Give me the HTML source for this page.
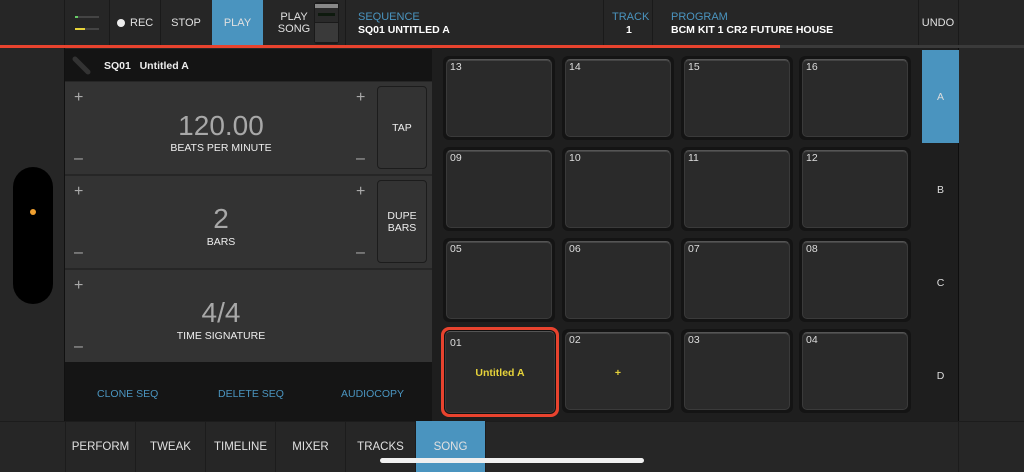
<!DOCTYPE html>
<html><head><meta charset="utf-8"><style>
*{box-sizing:border-box;margin:0;padding:0}
body{width:1024px;height:472px;overflow:hidden;background:#262626;font-family:"Liberation Sans",Arial,sans-serif;color:#ddd;position:relative}
.a{position:absolute}
.t{font-size:11px;color:#e0e0e0;text-align:center}
.vl{position:absolute;top:0;width:1px;height:45px;background:#1a1a1a}
.pad{position:absolute;width:112px;height:84px;border-radius:6px;background:#141414}
.pad div{position:absolute;left:3px;top:3px;right:3px;bottom:3px;border-radius:5px;background:#2a2a2a;border:1px solid #3a3a3a;border-top-color:#555;box-shadow:inset 0 1px 0 #444}
.pad span{position:absolute;left:7px;top:5px;font-size:10.5px;color:#ddd}
.row{position:absolute;left:65px;width:367px;height:92px;background:#333}
.pm{position:absolute;font-size:16px;color:#aaa;font-weight:300}
.big{position:absolute;width:310px;text-align:center;font-size:28px;color:#a8a8a8;font-weight:300}
.lab{position:absolute;width:310px;text-align:center;font-size:10.5px;color:#eee}
.btn{position:absolute;left:377px;width:50px;border:1px solid #1c1c1c;border-radius:4px;background:#333;font-size:10.5px;color:#eee;text-align:center;display:flex;align-items:center;justify-content:center;line-height:12px}
.tab{position:absolute;top:421px;height:51px;width:70px;border-left:1px solid #1c1c1c;font-size:11.5px;color:#e0e0e0;display:flex;align-items:center;justify-content:center}
.side{position:absolute;left:922px;width:37px;height:93px;font-size:10.5px;color:#ddd;display:flex;align-items:center;justify-content:center}
</style></head><body>
<div class="a" style="left:0;top:0;width:1024px;height:45px;background:#262626"></div>
<div class="vl" style="left:64px"></div><div class="vl" style="left:109px"></div><div class="vl" style="left:160px"></div><div class="vl" style="left:345px"></div><div class="vl" style="left:603px"></div><div class="vl" style="left:652px"></div><div class="vl" style="left:918px"></div><div class="vl" style="left:958px"></div>
<div class="a" style="left:75px;top:16px;width:24px;height:2px;background:#444"></div><div class="a" style="left:75px;top:16px;width:3px;height:2px;background:#6c6"></div>
<div class="a" style="left:75px;top:28px;width:24px;height:2px;background:#444"></div><div class="a" style="left:75px;top:28px;width:10px;height:2px;background:#e6d33a"></div>
<div class="a" style="left:117px;top:19px;width:8px;height:8px;border-radius:50%;background:#eee"></div>
<div class="a t" style="left:130px;top:17px">REC</div>
<div class="a t" style="left:160px;top:17px;width:52px">STOP</div>
<div class="a" style="left:212px;top:0;width:51px;height:45px;background:#4a94bf"></div>
<div class="a t" style="left:212px;top:17px;width:51px">PLAY</div>
<div class="a t" style="left:276px;top:11px;width:36px;line-height:12px">PLAY<br>SONG</div>
<div class="a" style="left:314px;top:2px;width:25px;height:42px;border-radius:3px;background:#1a1a1a"></div>
<div class="a" style="left:315px;top:4px;width:23px;height:4px;background:#888"></div>
<div class="a" style="left:315px;top:8px;width:23px;height:14px;background:#2a2a2a"></div>
<div class="a" style="left:318px;top:13px;width:17px;height:3px;background:#0e1a0e"></div>
<div class="a" style="left:315px;top:23px;width:23px;height:19px;background:#3a3a3a"></div>
<div class="a" style="left:358px;top:11px;font-size:11px;color:#4a94bf">SEQUENCE</div>
<div class="a" style="left:358px;top:24px;font-size:10.5px;color:#fff;font-weight:bold">SQ01 UNTITLED A</div>
<div class="a" style="left:612px;top:11px;font-size:11px;color:#4a94bf">TRACK</div>
<div class="a" style="left:626px;top:24px;font-size:10.5px;color:#fff;font-weight:bold">1</div>
<div class="a" style="left:671px;top:11px;font-size:11px;color:#4a94bf">PROGRAM</div>
<div class="a" style="left:671px;top:24px;font-size:10.5px;color:#fff;font-weight:bold">BCM KIT 1 CR2 FUTURE HOUSE</div>
<div class="a t" style="left:918px;top:17px;width:40px">UNDO</div>
<div class="a" style="left:0;top:45px;width:1024px;height:3px;background:#3a3a3a"></div>
<div class="a" style="left:0;top:45px;width:780px;height:3px;background:#e8432e"></div>
<div class="a" style="left:13px;top:167px;width:40px;height:137px;border-radius:20px;background:#000"></div>
<div class="a" style="left:30px;top:209px;width:6px;height:6px;border-radius:50%;background:#f0a030"></div>
<div class="a" style="left:64px;top:48px;width:1px;height:373px;background:#111"></div>
<div class="a" style="left:65px;top:49px;width:367px;height:32px;background:#141414"></div>
<svg class="a" style="left:72px;top:56px" width="20" height="20"><path d="M3 3 L16 16" stroke="#333" stroke-width="5" stroke-linecap="round"/></svg>
<div class="a" style="left:104px;top:60px;font-size:10.5px;font-weight:bold;color:#eee">SQ01 &nbsp; Untitled A</div>
<div class="row" style="top:82px"></div><div class="row" style="top:176px"></div><div class="row" style="top:270px"></div>
<div class="a" style="left:65px;top:362px;width:367px;height:59px;background:#151515"></div>
<div class="pm" style="left:74px;top:89px">+</div><div class="pm" style="left:356px;top:89px">+</div>
<div class="pm" style="left:74px;top:150px">–</div><div class="pm" style="left:356px;top:150px">–</div>
<div class="big" style="left:66px;top:110px">120.00</div><div class="lab" style="left:66px;top:142px">BEATS PER MINUTE</div>
<div class="btn" style="top:86px;height:83px">TAP</div>
<div class="pm" style="left:74px;top:183px">+</div><div class="pm" style="left:356px;top:183px">+</div>
<div class="pm" style="left:74px;top:244px">–</div><div class="pm" style="left:356px;top:244px">–</div>
<div class="big" style="left:66px;top:203px">2</div><div class="lab" style="left:66px;top:236px">BARS</div>
<div class="btn" style="top:180px;height:83px">DUPE<br>BARS</div>
<div class="pm" style="left:74px;top:277px">+</div>
<div class="pm" style="left:74px;top:338px">–</div>
<div class="big" style="left:66px;top:297px">4/4</div><div class="lab" style="left:66px;top:330px">TIME SIGNATURE</div>
<div class="a" style="left:97px;top:388px;font-size:10.5px;color:#4a94bf">CLONE SEQ</div>
<div class="a" style="left:218px;top:388px;font-size:10.5px;color:#4a94bf">DELETE SEQ</div>
<div class="a" style="left:341px;top:388px;font-size:10.5px;color:#4a94bf">AUDIOCOPY</div>
<div class="a" style="left:432px;top:48px;width:490px;height:373px;background:#1e1e1e"></div>
<div class="pad" style="left:443px;top:56px"><div></div><span>13</span></div>
<div class="pad" style="left:562px;top:56px"><div></div><span>14</span></div>
<div class="pad" style="left:681px;top:56px"><div></div><span>15</span></div>
<div class="pad" style="left:799px;top:56px"><div></div><span>16</span></div>
<div class="pad" style="left:443px;top:147px"><div></div><span>09</span></div>
<div class="pad" style="left:562px;top:147px"><div></div><span>10</span></div>
<div class="pad" style="left:681px;top:147px"><div></div><span>11</span></div>
<div class="pad" style="left:799px;top:147px"><div></div><span>12</span></div>
<div class="pad" style="left:443px;top:238px"><div></div><span>05</span></div>
<div class="pad" style="left:562px;top:238px"><div></div><span>06</span></div>
<div class="pad" style="left:681px;top:238px"><div></div><span>07</span></div>
<div class="pad" style="left:799px;top:238px"><div></div><span>08</span></div>
<div class="pad" style="left:441px;top:327px;width:118px;height:90px;background:#e8432e;border-radius:8px"><div style="left:4px;top:4px;right:4px;bottom:4px;box-shadow:0 0 0 1px #111"></div><span style="left:9px;top:10px">01</span><span style="left:0;width:118px;top:40px;text-align:center;color:#e6d33a;font-weight:bold;font-size:10.5px">Untitled A</span></div>
<div class="pad" style="left:562px;top:329px"><div></div><span>02</span><span style="left:0;width:112px;top:38px;text-align:center;color:#e6d33a;font-weight:bold">+</span></div>
<div class="pad" style="left:681px;top:329px"><div></div><span>03</span></div>
<div class="pad" style="left:799px;top:329px"><div></div><span>04</span></div>
<div class="a" style="left:922px;top:48px;width:37px;height:373px;background:#1e1e1e;border-right:1px solid #0e0e0e"></div>
<div class="side" style="top:50px;background:#4a94bf">A</div>
<div class="side" style="top:143px">B</div>
<div class="side" style="top:236px">C</div>
<div class="side" style="top:329px">D</div>
<div class="a" style="left:0;top:421px;width:1024px;height:51px;background:#262626;border-top:1px solid #1c1c1c"></div>
<div class="tab" style="left:65px">PERFORM</div>
<div class="tab" style="left:135px">TWEAK</div>
<div class="tab" style="left:205px">TIMELINE</div>
<div class="tab" style="left:275px">MIXER</div>
<div class="tab" style="left:345px">TRACKS</div>
<div class="tab" style="left:415px;background:#4a94bf">SONG</div>
<div class="a" style="left:485px;top:421px;width:1px;height:51px;background:#1c1c1c"></div>
<div class="a" style="left:958px;top:421px;width:1px;height:51px;background:#1c1c1c"></div>
<div class="a" style="left:380px;top:458px;width:264px;height:5px;border-radius:3px;background:#f0f0f0"></div>
</body></html>
